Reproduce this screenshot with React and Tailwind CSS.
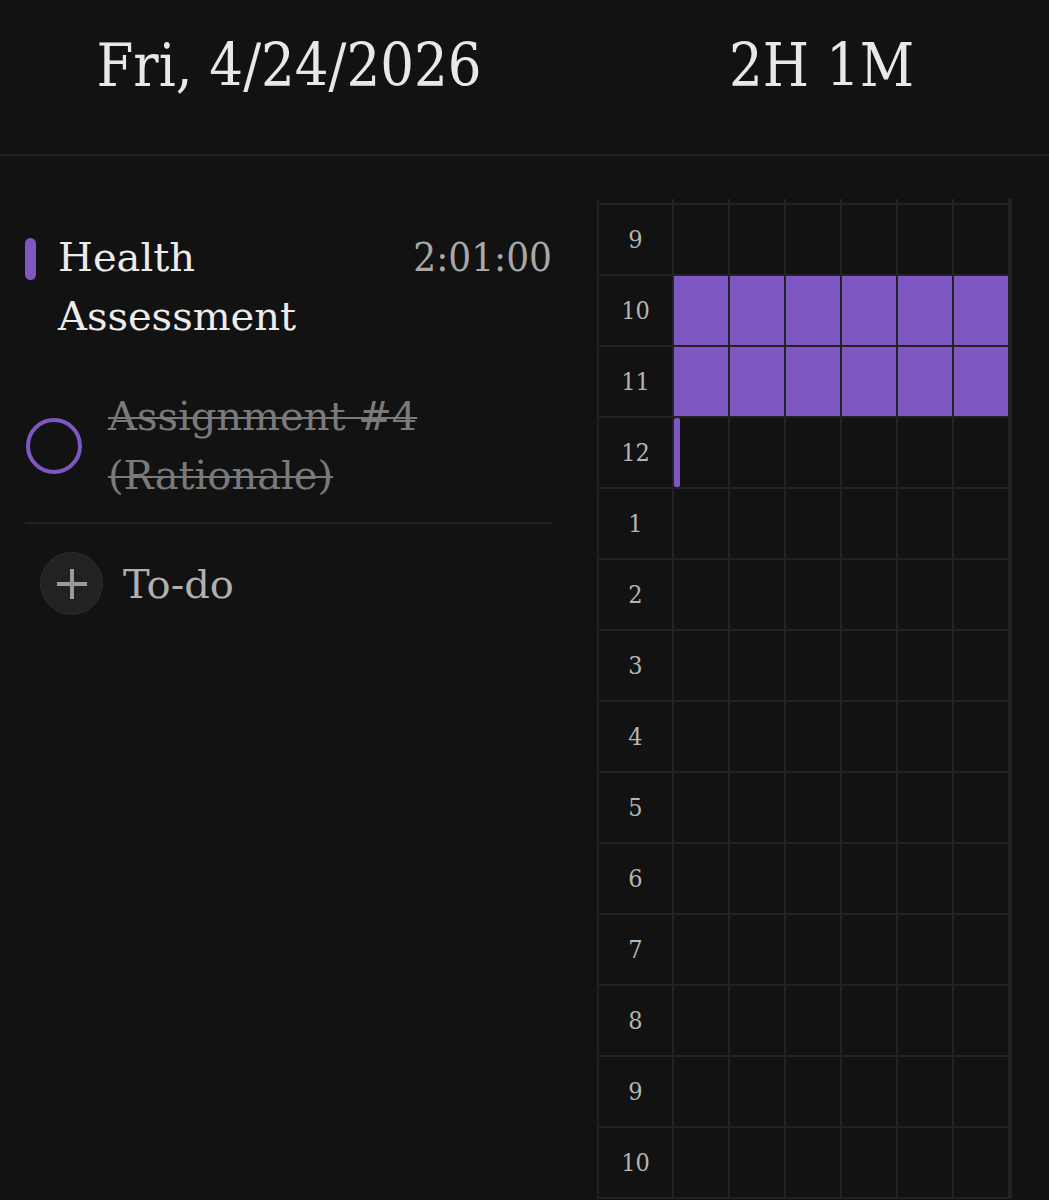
import React from 'react'

const HOURS = ['9', '10', '11', '12', '1', '2', '3', '4', '5', '6', '7', '8', '9', '10']
const FILLED = { 1: 6, 2: 6 }

const serif = { fontFamily: '"DejaVu Serif", "Liberation Serif", serif' }
const condensed = { fontFamily: '"DejaVu Serif Condensed", "DejaVu Serif", serif', fontStretch: 'condensed' }

function HourGrid() {
  return (
    <div className="w-[415px] bg-[#222222] px-[2px] pb-[2px] grid grid-cols-[73px_repeat(6,54px)] gap-[2px]">
      {Array.from({ length: 7 }).map((_, i) => (
        <div key={'top' + i} className="h-[4px] bg-[#121212]" />
      ))}
      {HOURS.map((h, r) => (
        <React.Fragment key={r}>
          <div className="h-[69px] bg-[#121212] flex items-center justify-center text-[25px] text-[#b5b5b5]" style={condensed}>
            {h}
          </div>
          {Array.from({ length: 6 }).map((_, c) => {
            const on = FILLED[r] && c < FILLED[r]
            return (
              <div key={c} className={`h-[69px] ${on ? 'bg-[#7e57c2]' : 'bg-[#121212]'}`}>
                {r === 3 && c === 0 && <div className="w-[6px] h-full bg-[#7e57c2] rounded-[2px]" />}
              </div>
            )
          })}
        </React.Fragment>
      ))}
    </div>
  )
}

export default function App() {
  return (
    <div className="w-[1049px] h-[1200px] overflow-hidden bg-[#121212] text-[#e6e6e6]">
      <header className="h-[156px] border-b-2 border-[#202020] grid grid-cols-[578px_1fr]">
        <div className="flex items-center justify-center pb-[22px] text-[59px] text-[#e8e8e8]" style={condensed}>
          Fri, 4/24/2026
        </div>
        <div className="flex items-center justify-center pb-[22px] pl-[16px] text-[59px] text-[#e8e8e8]" style={condensed}>
          2H 1M
        </div>
      </header>

      <div className="flex">
        <section className="w-[578px] pl-[25px] pr-[26px] pt-[78px]">
          <div className="flex items-start">
            <div className="w-[11px] h-[42px] mt-[4px] rounded-full bg-[#7e57c2]" />
            <div className="ml-[22px] flex-1 text-[40px] leading-[59px] text-[#ececec] -mt-[6px]" style={serif}>
              Health<br />Assessment
            </div>
            <div className="text-[40px] leading-[59px] text-[#a8a8a8] -mt-[6px]" style={condensed}>2:01:00</div>
          </div>

          <div className="flex items-center mt-[41px] pb-[17px]">
            <div className="w-[56px] h-[56px] ml-[1px] rounded-full border-[4px] border-[#7e57c2]" />
            <div className="ml-[26px] text-[40px] leading-[59px] text-[#7a7a7a] line-through decoration-[2px]" style={serif}>
              Assignment #4<br />(Rationale)
            </div>
          </div>

          <div className="border-t-2 border-[#222222]" />

          <div className="flex items-center mt-[28px] ml-[15px]">
            <div className="w-[63px] h-[63px] rounded-full bg-[#222222] border border-[#2c2c2c] flex items-center justify-center">
              <svg width="34" height="34" viewBox="0 0 34 34" fill="none" stroke="#9a9a9a" strokeWidth="4">
                <path d="M17 2v30M2 17h30" />
              </svg>
            </div>
            <span className="ml-[20px] text-[40px] text-[#b0b0b0]" style={serif}>To-do</span>
          </div>
        </section>

        <section className="pt-[43px] pl-[19px]">
          <HourGrid />
        </section>
      </div>
    </div>
  )
}
